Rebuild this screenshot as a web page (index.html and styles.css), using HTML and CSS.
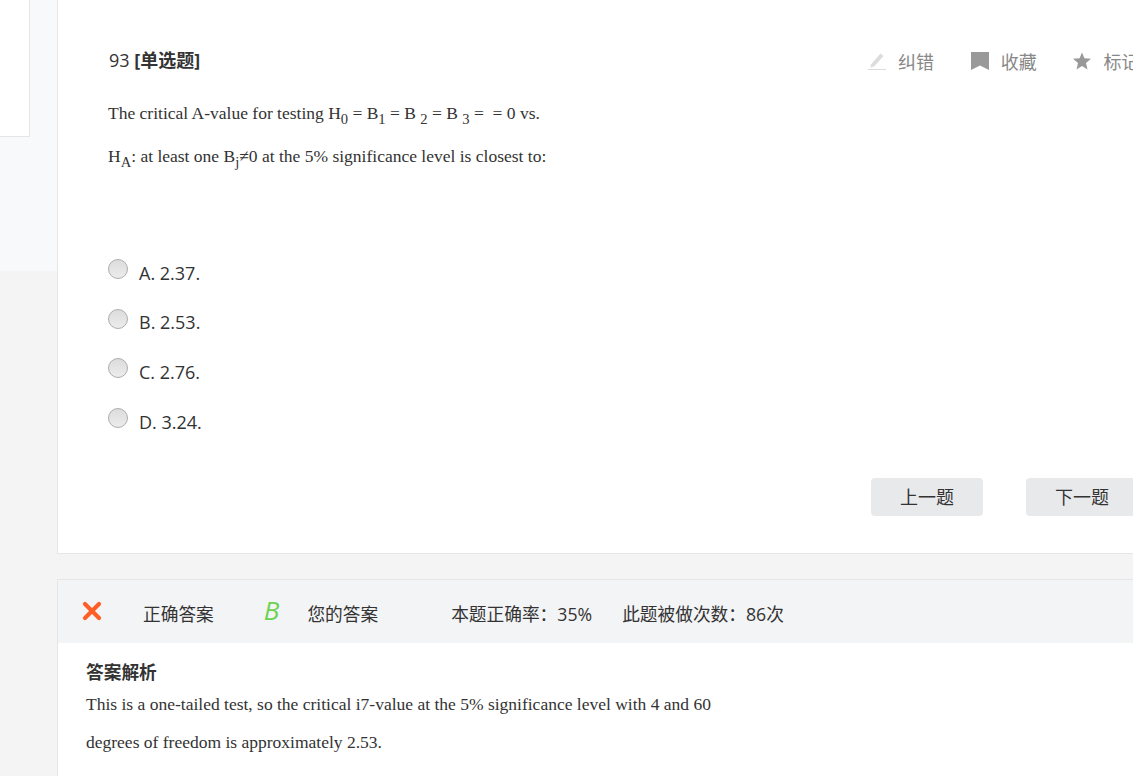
FILE: index.html
```html
<!DOCTYPE html>
<html>
<head>
  <title>93 单选题</title>
  <link rel="stylesheet" href="styles.css">
</head>
<body>
<div class="page">
  <div class="side">
    <div class="side-box"></div>
  </div>
  <div class="main">
    <div class="question">
      <div class="q-head">
        <div class="q-title">93 <b>[单选题]</b></div>
        <div class="q-tools">
          <span class="tool">
            <svg class="tool-icon" width="18" height="18" viewBox="0 0 18 18"><path d="M3 12.5 12.5 1.5 15.5 4 6 14.5 2.5 15.5z" fill="#dcdcdc"/><rect x="0" y="17" width="18" height="1" fill="#dcdcdc"/></svg>
            纠错
          </span>
          <span class="tool">
            <svg class="tool-icon" width="18" height="18" viewBox="0 0 18 18"><path d="M0 0H18V18L9 13.5 0 18z" fill="#999"/></svg>
            收藏
          </span>
          <span class="tool">
            <svg class="tool-icon" width="18" height="18" viewBox="0 0 18 18"><path d="M9 .5 11.4 6.2 18 6.8 13 11.1 14.5 17.5 9 14.1 3.5 17.5 5 11.1 0 6.8 6.6 6.2z" fill="#999"/></svg>
            标记
          </span>
        </div>
      </div>
      <div class="stem">
        <p>The critical A-value for testing H<sub>0</sub> = B<sub>1</sub> = B <sub>2</sub> = B <sub>3</sub> = &nbsp;= 0 vs.</p>
        <p>H<sub>A</sub>: at least one B<sub>j</sub>≠0 at the 5% significance level is closest to:</p>
      </div>
      <ul class="options">
        <li class="option"><span class="radio"></span>A. 2.37.</li>
        <li class="option"><span class="radio"></span>B. 2.53.</li>
        <li class="option"><span class="radio"></span>C. 2.76.</li>
        <li class="option"><span class="radio"></span>D. 3.24.</li>
      </ul>
      <div class="q-nav">
        <a class="btn">上一题</a>
        <a class="btn">下一题</a>
      </div>
    </div>
    <div class="answer">
      <div class="a-bar">
        <svg class="a-wrong" width="20" height="20" viewBox="0 0 20 20"><path d="M3 3 17 17M17 3 3 17" stroke="#ff5f26" stroke-width="4.2" stroke-linecap="round"/></svg>
        <span class="a-label">正确答案</span>
        <i class="a-letter">B</i>
        <span class="a-label">您的答案</span>
        <span class="a-stat">本题正确率：35%</span>
        <span class="a-stat">此题被做次数：86次</span>
      </div>
      <div class="a-body">
        <h4>答案解析</h4>
        <p>This is a one-tailed test, so the critical i7-value at the 5% significance level with 4 and 60</p>
        <p>degrees of freedom is approximately 2.53.</p>
      </div>
    </div>
  </div>
</div>
</body>
</html>
```

FILE: styles.css
```css
html, body {
  margin: 0;
  height: 776px;
  overflow: hidden;
}

body {
  background-color: #f4f4f4;
  color: #333;
  font-family: "Open Sans", "Noto Sans CJK SC", sans-serif;
  font-size: 18px;
}

.page {
  display: flex;
  width: 1400px;
}

.side {
  width: 57px;
  height: 271px;
  flex: none;
  background-color: #f8f9fb;
}

.side-box {
  width: 30px;
  height: 137px;
  box-sizing: border-box;
  background-color: #fff;
  border-right: 1px solid #e5e5e5;
  border-bottom: 1px solid #e5e5e5;
}

.main {
  width: 1200px;
}

.question {
  height: 554px;
  box-sizing: border-box;
  padding: 46px 0 0 50px;
  background-color: #fff;
  border-left: 1px solid #e6e6e6;
  border-bottom: 1px solid #e6e6e6;
}

.q-head {
  display: flex;
  align-items: center;
  height: 30px;
}

.q-title {
  width: 759px;
  padding: 0 0 4px 1px;
  font-size: 18px;
}

.q-tools {
  display: flex;
  color: #888;
}

.tool {
  display: flex;
  align-items: center;
  width: 102.7px;
}

.tool-icon {
  margin-right: 12px;
}

.stem {
  margin-top: 26px;
  height: 146px;
  font-family: "Liberation Serif", serif;
  font-size: 17.5px;
  color: #333;
}

.stem p {
  margin: 0 0 21px;
  line-height: 22px;
}

sub {
  line-height: 0;
}

.options {
  list-style: none;
  margin: 0;
  padding: 0;
  color: #333;
}

.option {
  display: flex;
  align-items: center;
  height: 49.6px;
}

.radio {
  width: 18px;
  height: 18px;
  margin: -7px 11px 0 0;
  border: 1px solid #adadad;
  border-radius: 50%;
  background: linear-gradient(#dcdcdc, #ececec);
}

.q-nav {
  display: flex;
  gap: 43px;
  margin: 32px 0 0 763px;
}

.btn {
  width: 112px;
  height: 38px;
  line-height: 38px;
  text-align: center;
  background-color: #e8e9eb;
  border-radius: 4px;
}

.answer {
  margin-top: 25px;
  height: 300px;
  background-color: #fff;
  border-left: 1px solid #e6e6e6;
  border-top: 1px solid #e6e6e6;
}

.a-bar {
  display: flex;
  align-items: center;
  height: 61px;
  padding: 2px 0 0 24px;
  font-size: 17.7px;
  background-color: #f3f4f6;
}

.a-wrong {
  margin: -4px 41px 0 0;
}

.a-letter {
  margin: -6px 28px 0 50px;
  font-size: 26px;
  color: #6cd24f;
}

.a-stat {
  margin-left: 30px;
}

.a-label + .a-stat {
  margin-left: 73px;
}

.a-body {
  padding: 16px 0 0 28px;
}

.a-body h4 {
  margin: 0 0 8px;
  font-size: 17.7px;
  line-height: 26px;
}

.a-body p {
  margin: 0 0 16px;
  line-height: 22px;
  font-family: "Liberation Serif", serif;
  font-size: 17.5px;
}
```
